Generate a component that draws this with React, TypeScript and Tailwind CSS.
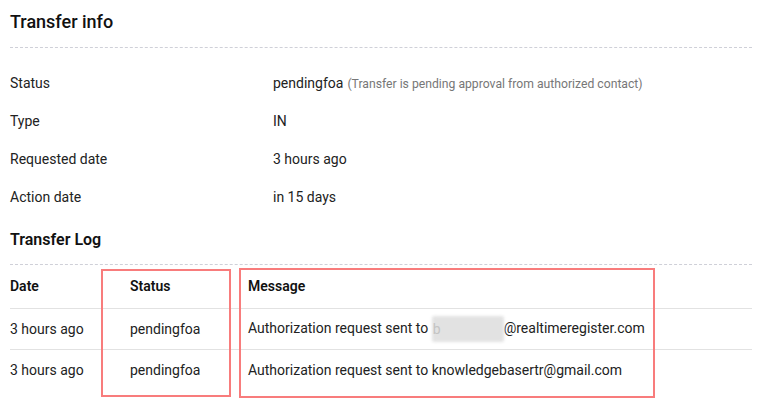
const infoRows = [
  { label: "Status", value: "pendingfoa", note: "(Transfer is pending approval from authorized contact)" },
  { label: "Type", value: "IN" },
  { label: "Requested date", value: "3 hours ago" },
  { label: "Action date", value: "in 15 days" },
];

function Redacted() {
  return (
    <span className="relative inline-block h-[26px] w-[72px] align-middle">
      <span className="absolute inset-0 rounded-[2px] bg-[#e2e2e2] blur-[1.5px]" />
      <span className="absolute left-[1px] top-0 leading-[26px] text-[#c4c4c4]">b</span>
    </span>
  );
}

export default function App() {
  return (
    <div className="relative h-[413px] w-[765px] bg-white font-['Roboto',sans-serif] text-[14px] text-[#222]">
      <div className="ml-[10px] w-[742px]">
        {/* Transfer info */}
        <div className="flex h-[48px] items-center border-b border-dashed border-[#cfd0d8] pb-[4px]">
          <h2 className="text-[18px] font-medium text-[#111]">Transfer info</h2>
        </div>
        <div className="pt-[16px]">
          {infoRows.map((r) => (
            <div key={r.label} className="flex h-[38px] items-center">
              <div className="w-[263px]">{r.label}</div>
              <div>
                {r.value}
                {r.note && <span className="ml-[4px] text-[12.2px] text-[#777]">{r.note}</span>}
              </div>
            </div>
          ))}
        </div>

        {/* Transfer Log */}
        <div className="flex h-[49px] items-center border-b border-dashed border-[#cfd0d8]">
          <h3 className="text-[16px] font-semibold text-[#111]">Transfer Log</h3>
        </div>
        <div className="grid grid-cols-[120px_118px_1fr]">
          <div className="flex h-[44px] items-center border-b border-[#e2e2e2] font-semibold text-[#111]">Date</div>
          <div className="flex h-[44px] items-center border-b border-[#e2e2e2] font-semibold text-[#111]">Status</div>
          <div className="flex h-[44px] items-center border-b border-[#e2e2e2] font-semibold text-[#111]">Message</div>

          <div className="flex h-[41px] items-center border-b border-[#e2e2e2]">3 hours ago</div>
          <div className="flex h-[41px] items-center border-b border-[#e2e2e2]">pendingfoa</div>
          <div className="flex h-[41px] items-center border-b border-[#e2e2e2]">
            <span>
              Authorization request sent to <Redacted />@realtimeregister.com
            </span>
          </div>

          <div className="flex h-[41px] items-center">3 hours ago</div>
          <div className="flex h-[41px] items-center">pendingfoa</div>
          <div className="flex h-[41px] items-center">Authorization request sent to knowledgebasertr@gmail.com</div>
        </div>
      </div>

      {/* annotation boxes */}
      <div className="absolute left-[101px] top-[269px] h-[128px] w-[130px] border-2 border-[#f87c7c]" />
      <div className="absolute left-[239px] top-[268px] h-[130px] w-[416px] border-2 border-[#f87c7c]" />
    </div>
  );
}
